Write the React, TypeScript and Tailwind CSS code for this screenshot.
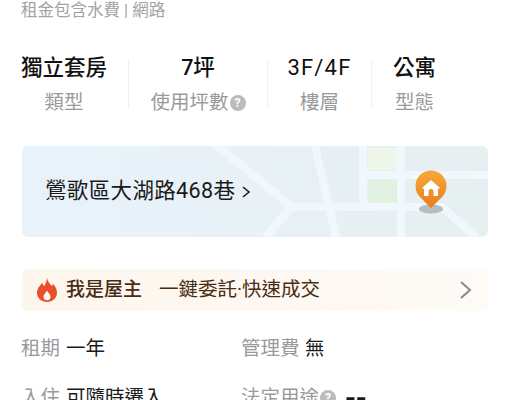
import React from 'react';

const cjk = "font-['Roboto','Noto_Sans_CJK_TC',sans-serif]";

function HelpDot() {
  return (
    <span className="w-[16px] h-[16px] text-[12px] inline-flex items-center justify-center rounded-full bg-[#bcbcbc] text-white font-bold leading-none">?</span>
  );
}

function Stat({ title, label, help, className, titleClass = 'text-[21.5px] font-medium' }: { title: string; label: string; help?: boolean; className: string; titleClass?: string }) {
  return (
    <div className={`flex flex-col items-center whitespace-nowrap ${className}`}>
      <div className={`leading-[30px] text-[#111] ${titleClass}`}>{title}</div>
      <div className="mt-[5px] flex items-center text-[19.5px] leading-[30px] text-[#9a9a9a]">
        {label}
        {help && <span className="ml-[1px] flex"><HelpDot /></span>}
      </div>
    </div>
  );
}

function Divider() {
  return <div className="mb-[3px] h-[48px] w-px bg-[#f0f0f0]" />;
}

function MapArt() {
  return (
    <svg className="absolute inset-0 w-full h-full" viewBox="0 0 466 91" fill="none">
      <defs>
        <linearGradient id="mapbg" x1="0" y1="0" x2="1" y2="0">
          <stop offset="0" stopColor="#e8f2fb" />
          <stop offset="1" stopColor="#e6f0f1" />
        </linearGradient>
        <linearGradient id="pin" x1="0" y1="0" x2="0" y2="1">
          <stop offset="0" stopColor="#f6a83a" />
          <stop offset="1" stopColor="#ea7d1c" />
        </linearGradient>
      </defs>
      <rect width="466" height="91" fill="url(#mapbg)" />
      <rect x="346" y="2" width="29" height="22" fill="#eef7ea" />
      <rect x="346" y="34" width="29" height="23" fill="#e0f1e2" />
      <g stroke="#f1f8fd" strokeWidth="8">
        <path d="M193 -2 L270 61 L243 91" />
        <path d="M270 61 H420 L454 91" />
        <path d="M293 0 L314 91" />
        <path d="M341 0 V61" />
        <path d="M379 0 V91" />
        <path d="M341 29 H466" />
      </g>
      <ellipse cx="409" cy="63" rx="12" ry="4.5" fill="#b9bcbe" />
      <path d="M409 62 L398 51 A15.5 15.5 0 1 1 420 51 Z" fill="url(#pin)" />
      <path
        fillRule="evenodd"
        d="M409 34 L418 42 L416 43 V50 H402 V43 L400 42 Z M406.5 50 V45.5 A2.5 2.5 0 0 1 411.5 45.5 V50 Z"
        fill="#fff"
      />
    </svg>
  );
}

function Flame() {
  return (
    <svg width="20" height="24" viewBox="0 0 20 24">
      <path
        fillRule="evenodd"
        fill="#e8502c"
        d="M10 0 C11 4 13 6 15 8 C15.5 7 16 6.5 16.5 6 C18.5 9 20 11.5 20 15 C20 20 15.5 24 10 24 C4.5 24 0 20 0 15 C0 10 3 8 5 5 C6 6 6.5 7 7 8.5 C8.5 6 9.8 3 10 0 Z M10 12.5 C8.8 15 6.5 16 6.5 19 C6.5 21 8 22.3 10 22.3 C12 22.3 13.5 21 13.5 19 C13.5 16 11 15 10 12.5 Z"
      />
    </svg>
  );
}

export default function App() {
  return (
    <div className={`${cjk} h-[400px] w-[510px] overflow-hidden bg-white px-[21px]`}>
      <div className="mt-[1px] text-[16.5px] leading-[20px] text-[#a3a3a3]">租金包含水費 | 網路</div>

      <div className="mt-[32px] flex h-[65px] w-[436px] items-center">
        <Stat title="獨立套房" label="類型" className="w-[86px] mr-[21px]" />
        <Divider />
        <Stat title="7坪" label="使用坪數" help className="w-[138px]" />
        <Divider />
        <Stat title="3F/4F" label="樓層" titleClass="text-[22px] tracking-[1.2px]" className="w-[103px]" />
        <Divider />
        <Stat title="公寓" label="型態" className="w-[85px]" />
      </div>

      <div className="relative mt-[28px] ml-[1px] flex h-[91px] w-[466px] items-center overflow-hidden rounded-[6px]">
        <MapArt />
        <span className="relative ml-[23px] text-[21.5px] tracking-[0.35px] text-[#1a1a1a]">鶯歌區大湖路468巷</span>
        <svg className="relative ml-[6px]" width="10" height="14" viewBox="0 0 10 14" fill="none" stroke="#222" strokeWidth="1.6">
          <path d="M2 2 L8 7 L2 12" />
        </svg>
      </div>

      <div className="mt-[32px] ml-[1px] flex h-[42px] w-[466px] items-center rounded-[6px] bg-gradient-to-r from-[#fdf6ed] to-[#fefaf6] pl-[15px] pr-[16px]">
        <Flame />
        <span className="ml-[9px] text-[19px] font-medium text-[#4a2c14]">我是屋主</span>
        <span className="ml-[17px] text-[19.5px] text-[#4a2c14]">一鍵委託·快速成交</span>
        <svg className="ml-auto" width="13" height="20" viewBox="0 0 13 20" fill="none" stroke="#8a8a8a" strokeWidth="2">
          <path d="M2 2 L11 10 L2 18" />
        </svg>
      </div>

      <div className="mt-[23px] grid grid-cols-[220px_1fr] gap-y-[19px] text-[19.5px] leading-[30px]">
        <div className="flex">
          <span className="w-[45px] text-[#9a9a9a]">租期</span>
          <span className="text-[#1a1a1a]">一年</span>
        </div>
        <div className="flex">
          <span className="w-[64px] text-[#9a9a9a]">管理費</span>
          <span className="text-[#1a1a1a]">無</span>
        </div>
        <div className="flex">
          <span className="w-[45px] text-[#9a9a9a]">入住</span>
          <span className="text-[#1a1a1a]">可隨時遷入</span>
        </div>
        <div className="flex items-center">
          <span className="text-[#9a9a9a]">法定用途</span>
          <span className="ml-[1px] flex"><HelpDot /></span>
          <span className="ml-[9px] font-['DejaVu_Sans'] text-[26px] font-bold text-[#1a1a1a]">--</span>
        </div>
      </div>
    </div>
  );
}
